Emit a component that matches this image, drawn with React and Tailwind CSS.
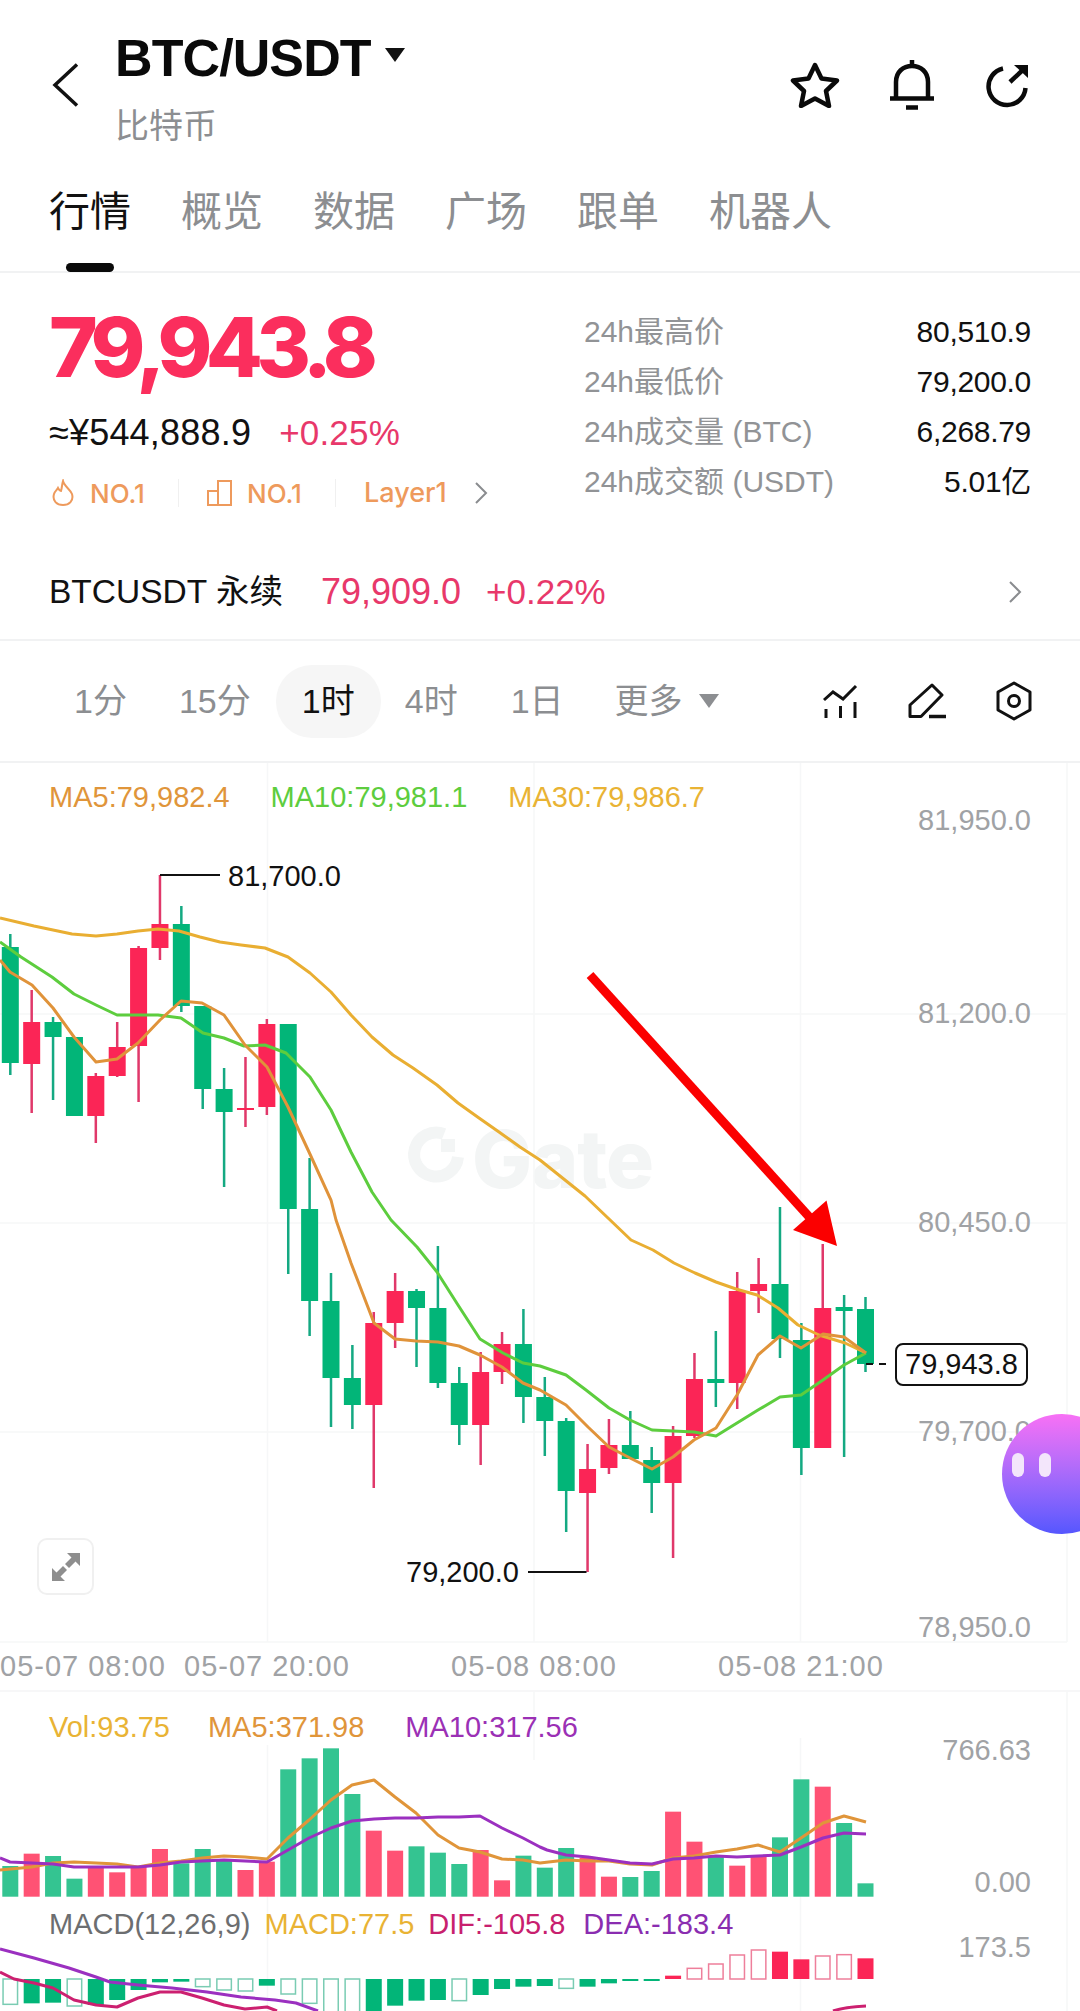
import React from 'react';

const UP = '#fb2556';
const DOWN = '#02b578';
const stepX = 21.38;
const cx = (i) => 10.3 + stepX * i;

// [dir, wickTop, wickBottom, bodyTop, bodyBottom]
const candles = [
  ['d', 934, 1075, 947, 1063], ['u', 990, 1113, 1022, 1064], ['d', 1017, 1100, 1022, 1037], ['d', 1037, 1116, 1037, 1116],
  ['u', 1073, 1143, 1076, 1116], ['u', 1022, 1077, 1047, 1076], ['u', 946, 1102, 948, 1046], ['u', 875, 960, 924, 948],
  ['d', 906, 1012, 924, 1006], ['d', 1006, 1109, 1006, 1089], ['d', 1068, 1187, 1089, 1112], ['u', 1057, 1127, 1108, 1110],
  ['u', 1019, 1115, 1024, 1107], ['d', 1024, 1274, 1024, 1209], ['d', 1158, 1336, 1209, 1301], ['d', 1273, 1427, 1301, 1378],
  ['d', 1345, 1429, 1378, 1405], ['u', 1312, 1488, 1323, 1405], ['u', 1273, 1348, 1291, 1323], ['d', 1289, 1367, 1291, 1308],
  ['d', 1246, 1388, 1308, 1383], ['d', 1367, 1445, 1383, 1425], ['u', 1352, 1465, 1372, 1425], ['u', 1332, 1384, 1344, 1372],
  ['d', 1309, 1423, 1344, 1397], ['d', 1377, 1456, 1397, 1421], ['d', 1418, 1532, 1421, 1491], ['u', 1444, 1572, 1469, 1493],
  ['u', 1419, 1474, 1445, 1468], ['d', 1411, 1459, 1445, 1459], ['d', 1447, 1513, 1460, 1483], ['u', 1426, 1558, 1436, 1483],
  ['u', 1353, 1438, 1379, 1436], ['d', 1331, 1407, 1379, 1383], ['u', 1272, 1409, 1291, 1383], ['u', 1258, 1313, 1284, 1291],
  ['d', 1207, 1358, 1284, 1339], ['d', 1323, 1475, 1340, 1448], ['u', 1244, 1448, 1308, 1448], ['d', 1295, 1457, 1307, 1311],
  ['d', 1297, 1372, 1309, 1364],
];

const ma30 = '0,918 34,926 72,934 96,936 117,934 138,931 158,929 179,931 200,937 220,942 241,945 265,948 288,957 310,973 331,992 351,1015 372,1037 393,1055 413,1068 437,1085 458,1103 479,1118 499,1132 520,1147 540,1160 585,1196 631,1240 653,1250 674,1263 695,1273 716,1282 736,1289 757,1295 778,1308 798,1325 819,1335 845,1343 866,1353';
const ma10 = '0,942 21,957 52,977 74,994 96,1005 117,1015 138,1015 158,1015 181,1018 203,1033 224,1038 244,1046 265,1045 286,1053 310,1077 331,1110 351,1152 372,1192 391,1220 417,1247 437,1272 458,1305 480,1339 503,1353 523,1363 540,1366 566,1375 586,1390 609,1408 630,1420 652,1430 673,1431 694,1432 716,1436 737,1423 758,1410 780,1397 801,1395 823,1380 844,1365 866,1353';
const ma5 = '0,960 10,972 32,985 53,1008 74,1037 96,1062 117,1059 138,1043 160,1020 181,1001 202,1003 224,1015 245,1045 267,1067 288,1107 309,1152 331,1200 336,1220 351,1263 374,1323 395,1339 416,1341 438,1342 459,1346 480,1355 502,1367 523,1383 540,1390 566,1405 588,1427 609,1447 630,1458 652,1469 673,1457 694,1440 716,1428 737,1395 758,1355 780,1336 801,1348 823,1334 844,1337 866,1353';

const volTops = [618, 581, 588, 656, 618, 637, 620, 567, 610, 567, 600, 630, 605, 328, 295, 265, 402, 512, 572, 559, 578, 612, 570, 661, 587, 623, 564, 593, 650, 651, 633, 455, 545, 590, 617, 590, 532, 358, 380, 489, 670];
const volRed = [1, 4, 5, 6, 7, 11, 12, 17, 18, 22, 23, 27, 28, 31, 32, 34, 35, 38];
const volY = (v) => 1660 + v / 3;
const volMa5 = '0,1870 32,1867 53,1863 74,1862 96,1863 117,1864 138,1867 160,1863 181,1861 202,1858 224,1856 245,1857 267,1859 288,1838 309,1820 331,1800 352,1785 374,1780 395,1797 416,1813 438,1835 459,1848 480,1852 502,1859 523,1860 540,1863 566,1860 588,1861 609,1861 630,1864 652,1865 673,1858 694,1856 716,1852 737,1849 758,1845 780,1852 801,1838 823,1823 844,1816 866,1822';
const volMa10 = '0,1858 10,1862 32,1863 53,1864 74,1867 96,1867 117,1867 138,1867 160,1865 181,1862 202,1861 224,1860 245,1861 267,1862 288,1850 309,1838 331,1828 352,1821 374,1819 395,1818 416,1818 438,1817 459,1817 480,1816 502,1828 523,1838 540,1847 547,1850 566,1855 588,1857 609,1860 630,1863 652,1864 673,1859 694,1858 716,1856 737,1857 758,1856 780,1855 801,1847 823,1838 844,1833 866,1834';

// [filled, value in zoom units]
const macd = [
  [0, 1033], [1, 1030], [1, 1028], [0, 1038], [1, 1035], [1, 1020], [1, 990], [1, 967], [1, 965], [0, 980], [0, 990], [0, 993],
  [1, 977], [0, 1002], [0, 1030], [0, 1060], [0, 1060], [1, 1060], [1, 1037], [1, 1022], [1, 1020], [0, 1022], [1, 1005], [1, 987],
  [1, 980], [1, 978], [0, 985], [1, 980], [1, 970], [1, 963], [1, 959], [1, 947], [0, 925], [0, 912], [0, 885], [0, 870],
  [1, 875], [1, 898], [0, 888], [0, 884], [1, 895],
];
const dea = '0,1949 34,1958 69,1968 96,1977 110,1982 138,1985 172,1988 207,1992 241,1997 275,2000 296,2003 318,2011';
const dif = '0,1972 14,1979 34,1983 53,1988 74,2000 96,2005 117,2007 138,1998 160,1992 181,1992 202,1998 224,2005 245,2009 267,2007 277,2011';

function Star() {
  return (
    <svg width="50" height="46" viewBox="0 0 50 46" fill="none" stroke="#0a0a0a" strokeWidth="4.5" strokeLinejoin="round">
      <path d="M25 3 L31.5 16.5 L47 18.5 L36 29 L39 44 L25 36.5 L11 44 L14 29 L3 18.5 L18.5 16.5 Z" />
    </svg>
  );
}

function Bell() {
  return (
    <svg width="44" height="50" viewBox="0 0 44 50" fill="none" stroke="#0a0a0a" strokeWidth="4.5">
      <path d="M6 38 V22 C6 12 13 6 22 6 C31 6 38 12 38 22 V38" />
      <path d="M22 0 V6 M0 38.5 H44" />
      <path d="M16 47.5 H28" strokeWidth="4.5" />
    </svg>
  );
}

function ShareRefresh() {
  return (
    <svg width="46" height="46" viewBox="0 0 46 46" fill="none" stroke="#0a0a0a" strokeWidth="4.5">
      <path d="M19 6.5 A18.5 18.5 0 1 0 41.5 26" />
      <path d="M26 20 L42 5" />
      <path d="M30 3 H44 V16 Z" fill="#0a0a0a" stroke="none" />
    </svg>
  );
}

function ChartIcon() {
  return (
    <svg width="36" height="36" viewBox="0 0 36 36" fill="none" stroke="#111" strokeWidth="3">
      <path d="M2 17 L11 9 L21 16 L34 3" />
      <path d="M4 26 V35 M18.5 23 V35 M33 19 V35" />
    </svg>
  );
}

function PenIcon() {
  return (
    <svg width="38" height="36" viewBox="0 0 38 36" fill="none" stroke="#111" strokeWidth="3">
      <path d="M2 22 L24 2 L34 12 L13 33.5 H2 Z" strokeLinejoin="round" />
      <path d="M21 33.5 H38" strokeWidth="3.5" />
    </svg>
  );
}

function HexIcon() {
  return (
    <svg width="36" height="40" viewBox="0 0 36 40" fill="none" stroke="#111" strokeWidth="3">
      <path d="M18 2 L34 11 V29 L18 38 L2 29 V11 Z" strokeLinejoin="round" />
      <circle cx="18" cy="20" r="5.5" />
    </svg>
  );
}

function Chevron({ color = '#8a8c8f' }) {
  return (
    <svg width="14" height="22" viewBox="0 0 14 22" fill="none" stroke={color} strokeWidth="2">
      <path d="M2 1 L12 11 L2 21" />
    </svg>
  );
}

function PriceRow({ label, value }) {
  return (
    <div className="flex h-[50px] items-center justify-between">
      <span className="text-[#919396]">{label}</span>
      <span className="tracking-[-0.3px] text-[#111]">{value}</span>
    </div>
  );
}

function MainChartSvg() {
  return (
    <svg className="absolute inset-0" width="1080" height="880" viewBox="0 763 1080 880" fill="none">
      <g stroke="#f6f7f8" strokeWidth="1.5">
        <path d="M0 1014 H1067 M0 1223 H1067 M0 1432 H1067 M0 1642 H1067" />
        <path d="M267.5 763 V1642 M534 763 V1642 M800.5 763 V1642 M1067 763 V1642" />
      </g>
      {/* watermark logo */}
      <path d="M444 1134 A22 22 0 1 0 458 1157" stroke="#f3f5f5" strokeWidth="12" />
      <rect x="441" y="1139" width="14" height="13" fill="#f3f5f5" />
      {candles.map(([dir, wt, wb, bt, bb], i) => {
        const color = dir === 'u' ? UP : DOWN;
        const wick = dir === 'u' ? '#e0386a' : '#14a982';
        return (
          <g key={i}>
            <rect x={cx(i) - 1.25} y={wt} width="2.5" height={wb - wt} fill={wick} />
            <rect x={cx(i) - 8.5} y={bt} width="17" height={bb - bt} fill={color} />
          </g>
        );
      })}
      <polyline points={ma30} stroke="#e9ae32" strokeWidth="3" strokeLinejoin="round" />
      <polyline points={ma10} stroke="#5dcd3e" strokeWidth="3" strokeLinejoin="round" />
      <polyline points={ma5} stroke="#e0933a" strokeWidth="3" strokeLinejoin="round" />
      {/* high / low markers */}
      <path d="M160 875 H220 M528 1572 H586.5" stroke="#111" strokeWidth="2" />
      <path d="M866 1364 H892" stroke="#111" strokeWidth="2" strokeDasharray="7 6" />
      {/* red arrow */}
      <path d="M590 975 L812 1220" stroke="#fb0000" strokeWidth="9" />
      <path d="M826.5 1200.5 L793 1230 L837 1246 Z" fill="#fb0000" />
    </svg>
  );
}

function IndicatorSvg() {
  return (
    <svg className="absolute inset-0" width="1080" height="319" viewBox="0 1692 1080 319" fill="none">
      <path d="M267.5 1745 V2011 M800.5 1738 V2011 M1067 1692 V2011 M534 1692 V1760" stroke="#f6f7f8" strokeWidth="1.5" />
      {volTops.map((v, i) => (
        <rect
          key={i}
          x={cx(i) - 8}
          y={volY(v)}
          width="16"
          height={1896.7 - volY(v)}
          fill={volRed.includes(i) ? '#ff5274' : '#34c491'}
        />
      ))}
      <polyline points={volMa5} stroke="#e0953a" strokeWidth="3" strokeLinejoin="round" />
      <polyline points={volMa10} stroke="#9b30c0" strokeWidth="3" strokeLinejoin="round" />
      {macd.map(([filled, v], i) => {
        const up = i >= 31;
        const color = up ? '#fb2556' : '#02b578';
        const y = 1660 + v / 3;
        const top = Math.min(y, 1979);
        const h = Math.max(Math.abs(y - 1979), 2);
        return filled ? (
          <rect key={i} x={cx(i) - 8} y={top} width="16" height={h} fill={color} />
        ) : (
          <rect key={i} x={cx(i) - 7.25} y={top} width="14.5" height={h} fill="#fff" stroke={up ? '#ee7f9b' : '#7accb3'} strokeWidth="1.5" />
        );
      })}
      <polyline points={dea} stroke="#9b30c0" strokeWidth="3" strokeLinejoin="round" />
      <polyline points={dif} stroke="#cc2070" strokeWidth="3" strokeLinejoin="round" />
      <path d="M833 2011 Q845 2007 866 2006" stroke="#cc2070" strokeWidth="3" />
    </svg>
  );
}

export default function App() {
  return (
    <div className="relative h-[2011px] w-[1080px] overflow-hidden bg-white text-[#111] [font-family:'Liberation_Sans','Noto_Sans_CJK_SC',sans-serif]">
      {/* top bar */}
      <header className="flex h-[160px] pl-[52px] pr-[50px]">
        <svg className="mt-[63px]" width="27" height="44" viewBox="0 0 27 44" fill="none" stroke="#111" strokeWidth="3.5">
          <path d="M25 1.5 L3 22 L25 42.5" />
        </svg>
        <div className="ml-[36px] pt-[28px]">
          <div className="flex h-[60px] items-center">
            <span className="text-[52px] leading-[60px] font-bold tracking-[-0.9px] text-[#0a0a0a]">BTC/USDT</span>
            <span className="mt-[-6px] ml-[14px] h-0 w-0 border-x-[10px] border-t-[14px] border-x-transparent border-t-[#111]"></span>
          </div>
          <div className="mt-[16px] text-[34px] leading-[44px] text-[#8c8e91]">比特币</div>
        </div>
        <div className="mt-[60px] ml-auto flex h-[50px] items-center gap-[50px]">
          <Star />
          <Bell />
          <ShareRefresh />
        </div>
      </header>

      {/* tabs */}
      <nav className="relative flex h-[113px] gap-[50px] border-b-2 border-[#f1f2f3] pt-[32px] pl-[49px] text-[41px] leading-[41px] text-[#8c8e91]">
        <span className="text-[#111]">行情</span>
        <span>概览</span>
        <span>数据</span>
        <span>广场</span>
        <span>跟单</span>
        <span>机器人</span>
        <span className="absolute bottom-[-1px] left-[66px] h-[9px] w-[48px] rounded-[5px] bg-[#0a0a0a]"></span>
      </nav>

      {/* price summary */}
      <section className="flex h-[272px] justify-between pr-[49px] pl-[49px]">
        <div>
          <div className="mt-[26px] text-[83px] leading-[96px] font-extrabold tracking-[-6.6px] text-[#fb2e5d] [font-family:Inter,sans-serif]">79,943.8</div>
          <div className="mt-[19px] flex h-[38px] items-center gap-[28px] text-[36px] tracking-[0.2px]">
            <span>≈¥544,888.9</span>
            <span className="text-[35px] text-[#e8386a]">+0.25%</span>
          </div>
          <div className="mt-[23px] flex h-[36px] items-center text-[26px] font-medium text-[#ee9a5c] [font-family:Inter,sans-serif]">
            <svg className="ml-[2px]" width="24" height="28" viewBox="0 0 24 28" fill="none" stroke="#ee9a5c" strokeWidth="2">
              <path d="M12 2 C13 7 19 10 21 15 C23 22 18 26 12 26 C6 26 1 22 3 15 C4 12 6 11 7 9 C8 11 9 12 10 12 C11 9 11 5 12 2 Z" />
            </svg>
            <span className="ml-[15px] w-[60px]">NO.1</span>
            <span className="mx-[28px] h-[28px] w-px bg-[#f0f0f0]"></span>
            <svg width="25" height="26" viewBox="0 0 25 26" fill="none" stroke="#ee9a5c" strokeWidth="2">
              <path d="M1 11 H11 V25 H1 Z M11 1 H24 V25 H11 Z" />
            </svg>
            <span className="ml-[15px] w-[60px]">NO.1</span>
            <span className="mx-[28px] h-[28px] w-px bg-[#f0f0f0]"></span>
            <span className="text-[27px]">Layer1</span>
            <span className="ml-[27px] flex"><Chevron /></span>
          </div>
        </div>
        <div className="mt-[34px] w-[447px] text-[30px] leading-[50px]">
          <PriceRow label="24h最高价" value="80,510.9" />
          <PriceRow label="24h最低价" value="79,200.0" />
          <PriceRow label="24h成交量 (BTC)" value="6,268.79" />
          <PriceRow label="24h成交额 (USDT)" value="5.01亿" />
        </div>
      </section>

      {/* perpetual row */}
      <div className="flex h-[96px] items-center border-b-2 border-[#f1f2f3] pr-[58px] pl-[49px] text-[33.5px]">
        <span>BTCUSDT 永续</span>
        <span className="ml-[38px] text-[36px] text-[#e8386a]">79,909.0</span>
        <span className="ml-[25px] text-[35px] text-[#e8386a]">+0.22%</span>
        <span className="ml-auto flex"><Chevron /></span>
      </div>

      {/* time frames */}
      <div className="flex h-[122px] items-center border-b-2 border-[#f1f2f3] pr-[48px] pl-[74px] text-[34px] text-[#8c8e91]">
        <span>1分</span>
        <span className="ml-[52px]">15分</span>
        <span className="ml-[25px] flex h-[73px] w-[105px] items-center justify-center rounded-[36px] bg-[#f6f6f6] text-[#111]">1时</span>
        <span className="ml-[24px]">4时</span>
        <span className="ml-[53px]">1日</span>
        <span className="ml-[51px]">更多</span>
        <span className="ml-[16px] h-0 w-0 border-x-[10px] border-t-[14px] border-x-transparent border-t-[#8c8e91]"></span>
        <div className="ml-auto flex items-center gap-[50px]">
          <ChartIcon />
          <PenIcon />
          <HexIcon />
        </div>
      </div>

      {/* candlestick chart */}
      <section className="relative h-[880px]">
        <div className="absolute top-[356px] left-[472px] text-[80px] leading-[80px] font-extrabold tracking-[-1px] text-[#f3f5f5] [font-family:Inter,sans-serif]">Gate</div>
        <MainChartSvg />
        <div className="relative flex gap-[41px] pt-[16px] pl-[49px] text-[29px] leading-[36px]">
          <span className="text-[#e0953a]">MA5:79,982.4</span>
          <span className="text-[#5dcd3e]">MA10:79,981.1</span>
          <span className="text-[#e9b334]">MA30:79,986.7</span>
        </div>
        <div className="text-[29px] leading-[34px] text-[#a0a2a5]">
          <span className="absolute top-[40px] right-[49px]">81,950.0</span>
          <span className="absolute top-[233px] right-[49px]">81,200.0</span>
          <span className="absolute top-[442px] right-[49px]">80,450.0</span>
          <span className="absolute top-[651px] right-[49px]">79,700.0</span>
          <span className="absolute top-[847px] right-[49px]">78,950.0</span>
        </div>
        <span className="absolute top-[96px] left-[228px] text-[29px] leading-[34px]">81,700.0</span>
        <span className="absolute top-[792px] left-[406px] text-[29px] leading-[34px]">79,200.0</span>
        <span className="absolute top-[580px] left-[895px] flex h-[43px] w-[133px] items-center justify-center rounded-[8px] border-2 border-[#111] bg-white text-[29px]">79,943.8</span>
        <button className="absolute top-[775px] left-[37px] flex h-[57px] w-[57px] items-center justify-center rounded-[10px] border-2 border-[#f0f0f0] bg-white">
          <svg width="28" height="28" viewBox="0 0 28 28" fill="#8e8e8e">
            <path d="M15 0 H28 V13 L23.5 8.5 L17 15 L13 11 L19.5 4.5 Z" />
            <path d="M13 28 H0 V15 L4.5 19.5 L11 13 L15 17 L8.5 23.5 Z" />
          </svg>
        </button>
      </section>

      {/* time axis */}
      <div className="flex h-[49px] items-center border-b-2 border-[#f7f7f8] text-[29px] tracking-[1px] text-[#a0a2a5]">
        <span className="w-[184px]">05-07 08:00</span>
        <span className="w-[267px]">05-07 20:00</span>
        <span className="w-[267px]">05-08 08:00</span>
        <span>05-08 21:00</span>
      </div>

      {/* volume + macd */}
      <section className="relative h-[319px]">
        <IndicatorSvg />
        <div className="relative flex pt-[17px] pl-[49px] text-[29px] leading-[36px]">
          <span className="text-[#e9b334]">Vol:93.75</span>
          <span className="ml-[38px] text-[#e0953a]">MA5:371.98</span>
          <span className="ml-[41px] text-[#9b30b5]">MA10:317.56</span>
        </div>
        <div className="absolute top-[214px] left-[49px] flex text-[29px] leading-[36px]">
          <span className="text-[#6c6e70]">MACD(12,26,9)</span>
          <span className="ml-[14px] text-[#e9b334]">MACD:77.5</span>
          <span className="ml-[14px] text-[#c8206e]">DIF:-105.8</span>
          <span className="ml-[18px] text-[#8a2db0]">DEA:-183.4</span>
        </div>
        <div className="text-[29px] leading-[34px] text-[#a0a2a5]">
          <span className="absolute top-[41px] right-[49px]">766.63</span>
          <span className="absolute top-[173px] right-[49px]">0.00</span>
          <span className="absolute top-[238px] right-[49px]">173.5</span>
        </div>
      </section>

      {/* floating assistant */}
      <div className="absolute top-[1414px] left-[1002px] h-[120px] w-[120px] rounded-full bg-gradient-to-b from-[#f870f5] to-[#5556fe]">
        <div className="ml-[10px] flex gap-[15px] pt-[39px]">
          <span className="h-[24px] w-[12px] rounded-[6px] bg-[#f3e6fb]"></span>
          <span className="h-[24px] w-[12px] rounded-[6px] bg-[#f3e6fb]"></span>
        </div>
      </div>
    </div>
  );
}
